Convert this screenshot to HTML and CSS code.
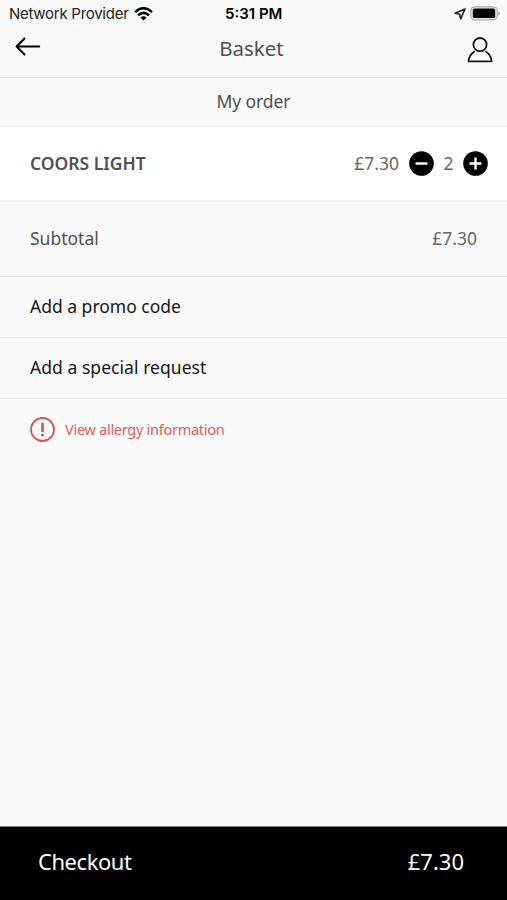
FILE: index.html
```html
<!DOCTYPE html>
<html lang="en">
<head>
<meta charset="utf-8">
<title>Basket</title>
<link rel="stylesheet" href="styles.css">
</head>
<body>
<div class="status">
  <div class="network"><span class="carrier">Network Provider</span>
    <svg width="19" height="14" viewBox="0 0 19 14" fill="none" stroke="#000" stroke-width="2.5"><path d="M1 5.1Q9.5-2.5 18 5.1M4 8.3Q9.5 3.4 15 8.3"/><path d="M6.5 10.5Q9.5 8 12.5 10.5L9.5 13.5Z" fill="#000" stroke="none"/></svg>
  </div>
  <time class="clock">5:31 PM</time>
  <div class="power">
    <svg width="12" height="12" viewBox="0 0 12 12" fill="none" stroke="#222" stroke-width="1.6" stroke-linejoin="round"><path d="M11 1L1 5.3L5.6 6.2L6.7 11Z"/></svg>
    <svg width="30" height="15" viewBox="0 0 30 15"><rect x=".8" y=".8" width="26.4" height="13" rx="4" fill="#eee" stroke="#aaa" stroke-width="1.2"/><rect x="2.8" y="2.6" width="22.4" height="9.4" rx="1.8"/><path d="M28.3 5Q30 5.6 30 7.3Q30 9 28.3 9.6Z" fill="#aaa"/></svg>
  </div>
</div>
<header class="header">
  <svg class="back" width="26" height="20" viewBox="0 0 26 20" fill="none" stroke="#000" stroke-width="2" stroke-linecap="round" stroke-linejoin="round"><path d="M24.2 9.5H2M9.5 1.5L1.6 9.5L9.5 17.5"/></svg>
  <h1 class="title">Basket</h1>
  <svg class="user" width="26" height="26" viewBox="0 0 26 26" fill="none" stroke="#111" stroke-width="1.8" stroke-linecap="round" stroke-linejoin="round"><circle cx="13" cy="7.6" r="6.6"/><path d="M7.2 14.8C4.2 16.6 1.8 20.1 1.5 24.4H24.6C24.2 20.1 22 16.6 18.9 14.8"/></svg>
</header>
<main class="main">
  <h2 class="order">My order</h2>
  <div class="item">
    <span class="name">COORS LIGHT</span>
    <span class="price">£7.30</span>
    <svg class="button minus" width="25" height="25" viewBox="0 0 25 25"><circle cx="12.5" cy="12.5" r="12.3"/><path d="M6.5 12.5H18.5" stroke="#fff" stroke-width="2.4"/></svg>
    <span class="count">2</span>
    <svg class="button" width="25" height="25" viewBox="0 0 25 25"><circle cx="12.5" cy="12.5" r="12.3"/><path d="M6.5 12.5H18.5M12.5 6.5V18.5" stroke="#fff" stroke-width="2.4"/></svg>
  </div>
  <div class="subtotal"><span class="label">Subtotal</span><span class="price">£7.30</span></div>
  <div class="row"><span class="promo">Add a promo code</span></div>
  <div class="row"><span class="request">Add a special request</span></div>
  <div class="allergy">
    <svg width="25" height="25" viewBox="0 0 25 25" fill="none" stroke="#dc5053" stroke-width="1.8"><circle cx="12.5" cy="12.5" r="11.5"/><path d="M12.5 6.7V14" stroke-width="2.6" stroke-linecap="round"/><circle cx="12.5" cy="18" r="1.5" fill="#dc5053" stroke="none"/></svg>
    <span class="info">View allergy information</span>
  </div>
</main>
<footer class="checkout"><span class="action">Checkout</span><span class="total">£7.30</span></footer>
</body>
</html>
```
FILE: styles.css
```css
* { box-sizing: border-box; }
body {
  margin: 0;
  height: 900px;
  display: flex;
  flex-direction: column;
  background: #f9f9f9;
  color: #505050;
  font: 17.5px/24px "Noto Sans", sans-serif;
  white-space: nowrap;
  overflow: hidden;
}
svg { display: block; flex: none; }
.status {
  height: 27px;
  padding: 0 7px 0 9px;
  display: grid;
  grid-template-columns: 216px 1fr auto;
  align-items: center;
  font: 15px/27px Inter, sans-serif;
  color: #222;
}
.network, .power { display: flex; align-items: center; }
.network { gap: 5px; }
.carrier { letter-spacing: -0.27px; }
.clock { font-weight: 600; color: #000; }
.power { gap: 4px; }
.header {
  height: 51px;
  padding: 0 14px;
  display: grid;
  grid-template-columns: 26px 1fr 26px;
  border-bottom: 1px solid #e5e5e5;
}
.back { margin-top: 10px; margin-left: 1px; }
.user { margin-top: 10px; }
.title { margin: 6px 0 0; padding-right: 4px; font-size: 20.5px; line-height: 30px; font-weight: 400; text-align: center; }
.order { margin: 0; height: 49px; border-bottom: 2px solid #efefef; font-size: 17.5px; letter-spacing: -0.1px; font-weight: 400; line-height: 46px; text-align: center; }
.item { height: 75px; padding: 0 19px 2px 30px; display: flex; align-items: center; background: #fff; border-bottom: 2px solid #efefef; }
.name { flex: 1; font-weight: 600; font-size: 17.5px; }
.price { color: #666; font-size: 17.5px; }
.button { margin-top: 2px; }
.minus { margin-left: 10px; }
.count { width: 29px; text-align: center; color: #666; }
.subtotal { height: 75px; padding: 0 30px 2px; display: flex; align-items: center; justify-content: space-between; border-bottom: 1px solid #e5e5e5; }
.row { height: 61px; padding: 0 30px 2px; display: flex; align-items: center; color: #171717; border-bottom: 1px solid #e5e5e5; }
.request { letter-spacing: 0.05px; }
.allergy { height: 61px; padding: 0 30px; display: flex; align-items: center; gap: 10px; color: #dc5e60; font-size: 14.5px; }
.info { letter-spacing: -0.28px; padding-bottom: 2px; }
.checkout { margin-top: auto; height: 74px; padding: 0 43px 5px 38px; display: flex; align-items: center; justify-content: space-between; background: #000; color: #fff; border-top: 1px solid #888; font-size: 22px; }
.action { letter-spacing: -0.45px; }
```
